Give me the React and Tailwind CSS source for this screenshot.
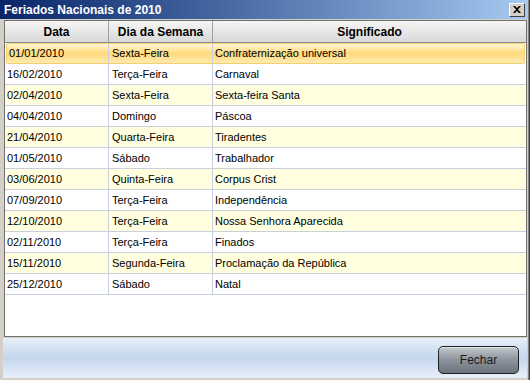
import React from "react";

const rows = [
  ["01/01/2010", "Sexta-Feira", "Confraternização universal"],
  ["16/02/2010", "Terça-Feira", "Carnaval"],
  ["02/04/2010", "Sexta-Feira", "Sexta-feira Santa"],
  ["04/04/2010", "Domingo", "Páscoa"],
  ["21/04/2010", "Quarta-Feira", "Tiradentes"],
  ["01/05/2010", "Sábado", "Trabalhador"],
  ["03/06/2010", "Quinta-Feira", "Corpus Crist"],
  ["07/09/2010", "Terça-Feira", "Independência"],
  ["12/10/2010", "Terça-Feira", "Nossa Senhora Aparecida"],
  ["02/11/2010", "Terça-Feira", "Finados"],
  ["15/11/2010", "Segunda-Feira", "Proclamação da República"],
  ["25/12/2010", "Sábado", "Natal"],
];

export default function App() {
  return (
    <div className="w-[530px] h-[380px] bg-[#d4d0c8] flex flex-col border-r border-[#404040] font-['Liberation_Sans',Arial,sans-serif] overflow-hidden">
      <div className="border-r border-[#808080] flex-1 flex flex-col">
        {/* Title bar */}
        <div className="h-[19px] bg-gradient-to-r from-[#0a246a] to-[#a6caf0] flex items-center justify-between pl-[4px] pr-[3px] shrink-0">
          <span className="text-white font-bold text-[12px] leading-none">Feriados Nacionais de 2010</span>
          <div className="w-[16px] h-[14px] bg-[#d4d0c8] border-t border-l border-white border-r border-b border-r-[#404040] border-b-[#404040] flex items-center justify-center">
            <svg width="8" height="7" viewBox="0 0 8 7">
              <path d="M0 0 L2 0 L4 2 L6 0 L8 0 L5 3.5 L8 7 L6 7 L4 5 L2 7 L0 7 L3 3.5 Z" fill="#000" />
            </svg>
          </div>
        </div>
        {/* Body */}
        <div className="flex-1 flex flex-col pl-[4px] pr-[1px] pt-[1px]">
          <div className="h-[317px] bg-white border border-[#707070] flex flex-col shrink-0">
            {/* Header */}
            <div className="h-[22px] flex bg-gradient-to-b from-[#f5f5f5] to-[#d9d9d9] border-b border-[#8a8a8a] shrink-0 text-[12px] font-bold text-black">
              <div className="w-[104px] border-r border-[#a0a0a0] flex items-center justify-center">Data</div>
              <div className="w-[104px] border-r border-[#a0a0a0] flex items-center justify-center">Dia da Semana</div>
              <div className="flex-1 flex items-center justify-center">Significado</div>
            </div>
            {/* Rows */}
            <div className="flex flex-col text-[11px] text-black">
              {rows.map((r, i) => {
                const selected = i === 0;
                const alt = i % 2 === 0;
                return (
                  <div
                    key={i}
                    className={
                      selected
                        ? "h-[21px] flex mx-[1px] rounded-[2px] border border-[#f0d070] bg-gradient-to-b from-[#fff6d2] via-[#ffd97a] to-[#ffeab0]"
                        : "h-[21px] flex border-b border-[#c8d0e0] " + (alt ? "bg-[#ffffe0]" : "bg-white")
                    }
                  >
                    <div className={(selected ? "w-[102px]" : "w-[104px]") + " border-r border-[#c8d0e0] flex items-center pl-[2px]"}>{r[0]}</div>
                    <div className="w-[104px] border-r border-[#c8d0e0] flex items-center pl-[3px]">{r[1]}</div>
                    <div className="flex-1 flex items-center pl-[2px]">{r[2]}</div>
                  </div>
                );
              })}
            </div>
          </div>
          {/* Bottom bar */}
          <div className="flex-1 -ml-[1px] mt-[1px] mb-[2px] bg-gradient-to-b from-[#e8f0fa] via-[#c4d6ec] to-[#e8f0fa] flex items-start justify-end pt-[8px] pr-[8px]">
            <button className="w-[81px] h-[28px] rounded-[5px] border border-[#202020] bg-gradient-to-b from-[#c4c8ce] via-[#8d939c] to-[#6a727c] text-[12px] text-[#1a1a1a] flex items-center justify-center shadow-[inset_0_1px_0_rgba(255,255,255,0.5)]">
              Fechar
            </button>
          </div>
        </div>
      </div>
    </div>
  );
}
